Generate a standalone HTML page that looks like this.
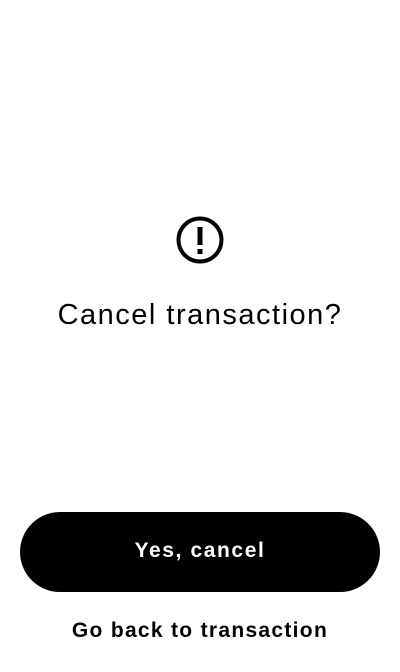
<!DOCTYPE html>
<html><head><style>
body{margin:0;width:400px;height:672px;background:#fff;font-family:"Liberation Sans",sans-serif;position:relative;overflow:hidden}
.t{position:absolute;left:0;width:400px;text-align:center;top:299px;font-size:29px;color:#000;letter-spacing:1.5px}
.b{position:absolute;left:20px;top:512px;width:360px;height:80px;border-radius:40px;background:#000;color:#fff;font-size:21px;font-weight:bold;line-height:78px;text-align:center;letter-spacing:1.6px}
.g{position:absolute;left:0;width:400px;top:619px;text-align:center;font-size:21px;font-weight:bold;color:#000;letter-spacing:1.3px}
</style></head><body>
<svg style="position:absolute;left:175px;top:215px" width="50" height="50" viewBox="0 0 50 50">
<circle cx="25" cy="25" r="21.5" fill="none" stroke="#000" stroke-width="4"/>
<rect x="22.5" y="12" width="5" height="18" fill="#000"/>
<rect x="22.5" y="34" width="5" height="5" fill="#000"/>
</svg>
<div class="t">Cancel transaction?</div>
<div class="b">Yes, cancel</div>
<div class="g">Go back to transaction</div>
</body></html>
